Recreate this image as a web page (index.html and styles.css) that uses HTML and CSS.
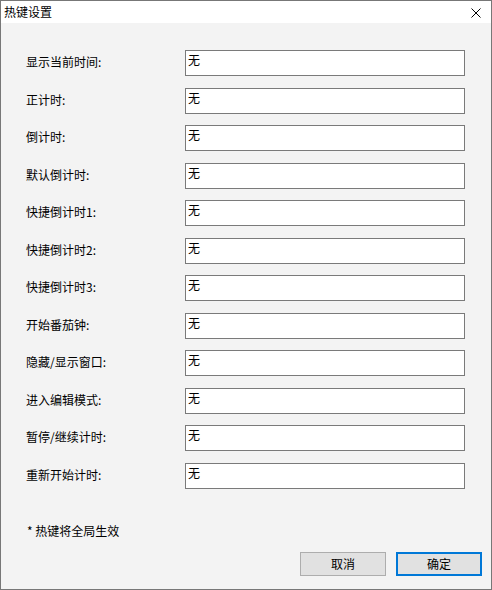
FILE: index.html
```html
<!DOCTYPE html>
<html lang="zh-CN">
<head>
<meta charset="utf-8">
<title>热键设置</title>
<link rel="stylesheet" href="styles.css">
</head>
<body>
<div class="window">
  <div class="titlebar">
    <span class="title">热键设置</span>
    <svg class="close" width="10" height="10" viewBox="0 0 10 10"><path d="M0.5 0.5 L9.5 9.5 M9.5 0.5 L0.5 9.5" stroke="#000" stroke-width="1" fill="none"/></svg>
  </div>
  <div class="content">
    <div class="rows">
      <div class="label">显示当前时间:</div><div class="box">无</div>
      <div class="label">正计时:</div><div class="box">无</div>
      <div class="label">倒计时:</div><div class="box">无</div>
      <div class="label">默认倒计时:</div><div class="box">无</div>
      <div class="label">快捷倒计时1:</div><div class="box">无</div>
      <div class="label">快捷倒计时2:</div><div class="box">无</div>
      <div class="label">快捷倒计时3:</div><div class="box">无</div>
      <div class="label">开始番茄钟:</div><div class="box">无</div>
      <div class="label">隐藏/显示窗口:</div><div class="box">无</div>
      <div class="label">进入编辑模式:</div><div class="box">无</div>
      <div class="label">暂停/继续计时:</div><div class="box">无</div>
      <div class="label">重新开始计时:</div><div class="box">无</div>
    </div>
    <div class="note">* 热键将全局生效</div>
    <div class="buttons">
      <div class="btn">取消</div>
      <div class="btn primary">确定</div>
    </div>
  </div>
</div>
</body>
</html>
```
FILE: styles.css
```css
html, body {
  margin: 0;
  padding: 0;
  background: #f3f3f3;
}
body {
  font-family: "Noto Sans CJK SC", "Noto Sans", "Liberation Sans", sans-serif;
  font-size: 12px;
  color: #000;
}
.window {
  box-sizing: border-box;
  width: 492px;
  height: 590px;
  border: 1px solid #777;
  background: #f3f3f3;
  display: flex;
  flex-direction: column;
}
.titlebar {
  height: 22px;
  background: #fff;
  display: flex;
  align-items: center;
  justify-content: space-between;
  padding: 0 10px 0 3px;
  flex: none;
}
.title {
  font-size: 12px;
  line-height: 16px;
}
.close {
  display: block;
  margin-top: 2px;
}
.content {
  flex: 1;
  display: flex;
  flex-direction: column;
  padding: 27px 26px 13px 25px;
}
.rows {
  display: grid;
  grid-template-columns: 159px 280px;
  grid-auto-rows: 26px;
  row-gap: 11.5px;
}
.label {
  display: flex;
  align-items: center;
  padding-bottom: 2px;
  line-height: 16px;
}
.box {
  box-sizing: border-box;
  border: 1px solid #7a7a7a;
  background: #fff;
  padding: 1px 2px;
  line-height: 16px;
}
.note {
  margin-top: 34px;
  padding-left: 1px;
  line-height: 16px;
}
.buttons {
  margin-top: auto;
  display: flex;
  justify-content: flex-end;
  gap: 10px;
  margin-right: -17px;
}
.btn {
  box-sizing: border-box;
  width: 86px;
  height: 24px;
  border: 1px solid #adadad;
  background: #e1e1e1;
  display: flex;
  align-items: center;
  justify-content: center;
  line-height: 16px;
}
.btn.primary {
  border: 2px solid #0078d7;
}
```
